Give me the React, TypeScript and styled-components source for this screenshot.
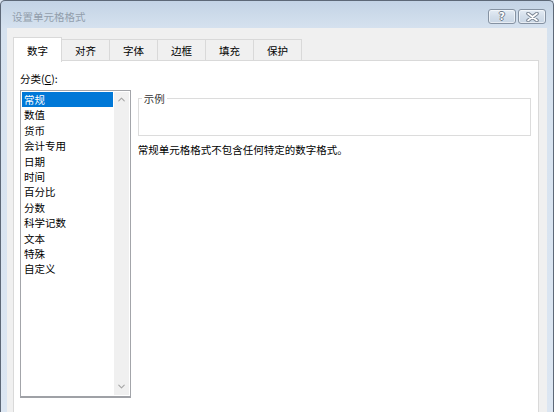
import React from 'react';
import styled, { createGlobalStyle } from 'styled-components';
import { ChevronUp, ChevronDown } from 'lucide-react';

const GlobalStyle = createGlobalStyle`
  html, body {
    margin: 0;
    padding: 0;
    overflow: hidden;
    background: #dce6f2;
  }
  body {
    font-family: "Noto Sans CJK SC", "Liberation Sans", sans-serif;
    font-size: 10.5px;
    color: #000;
  }
`;

const categories = [
  '常规',
  '数值',
  '货币',
  '会计专用',
  '日期',
  '时间',
  '百分比',
  '分数',
  '科学记数',
  '文本',
  '特殊',
  '自定义',
];

const tabs = ['数字', '对齐', '字体', '边框', '填充', '保护'];

const App: React.FC = () => {
  return (
    <>
      <GlobalStyle />
      <Window>
        <TitleBar>
          <Title>设置单元格格式</Title>
          <CaptionButtons>
            <CaptionButton>
              <HelpGlyph>?</HelpGlyph>
            </CaptionButton>
            <CaptionButton>
              <svg width="13" height="10" viewBox="0 0 13 10">
                <path d="M2 1.5 L11 8.5 M11 1.5 L2 8.5" stroke="#7b8694" strokeWidth="3.6" strokeLinecap="round" />
                <path d="M2 1.5 L11 8.5 M11 1.5 L2 8.5" stroke="#fff" strokeWidth="1.6" strokeLinecap="round" />
              </svg>
            </CaptionButton>
          </CaptionButtons>
        </TitleBar>
        <Content>
          <TabRow>
            {tabs.map((t, i) => (
              <Tab key={t} $active={i === 0}>
                {t}
              </Tab>
            ))}
          </TabRow>
          <Panel>
            <FieldLabel>
              分类(<u>C</u>):
            </FieldLabel>
            <Columns>
              <ListBox>
                <Items>
                  {categories.map((c, i) => (
                    <Item key={c} $selected={i === 0}>
                      {c}
                    </Item>
                  ))}
                </Items>
                <ScrollBar>
                  <ChevronUp size={11} color="#a6a6a6" strokeWidth={2.4} />
                  <ChevronDown size={11} color="#a6a6a6" strokeWidth={2.4} />
                </ScrollBar>
              </ListBox>
              <RightColumn>
                <GroupBox>
                  <Legend>示例</Legend>
                  <Sample />
                </GroupBox>
                <Description>常规单元格格式不包含任何特定的数字格式。</Description>
              </RightColumn>
            </Columns>
          </Panel>
        </Content>
      </Window>
    </>
  );
};

export default App;

const Window = styled.div`
  width: 554px;
  height: 412px;
  overflow: hidden;
  box-sizing: border-box;
  border: 1px solid #5d6877;
  border-bottom: none;
  border-radius: 5px 5px 0 0;
  background: linear-gradient(#c3d3e5, #d6e2ef 28px, #dce6f2);
  display: flex;
  flex-direction: column;
`;

const TitleBar = styled.div`
  height: 27px;
  flex-shrink: 0;
  box-sizing: border-box;
  padding: 8px 7px 0 11px;
  display: flex;
  align-items: flex-start;
  justify-content: space-between;
`;

const Title = styled.div`
  line-height: 16px;
  font-size: 10.5px;
  color: #929eac;
`;

const CaptionButtons = styled.div`
  display: flex;
  gap: 2px;
`;

const CaptionButton = styled.div`
  width: 28px;
  height: 15px;
  box-sizing: border-box;
  border: 1px solid #8592a2;
  border-radius: 3px;
  background: linear-gradient(#e4ecf5, #d3deea 50%, #c9d6e5);
  box-shadow: inset 0 0 0 1px rgba(255, 255, 255, 0.55);
  display: flex;
  align-items: center;
  justify-content: center;
`;

const HelpGlyph = styled.span`
  font-family: "DejaVu Sans", sans-serif;
  font-weight: bold;
  font-size: 10px;
  line-height: 11px;
  color: #fff;
  text-shadow: 1px 0 0 #6f7b8a, -1px 0 0 #6f7b8a, 0 1px 0 #6f7b8a, 0 -1px 0 #6f7b8a;
`;

const Content = styled.div`
  flex: 1;
  min-height: 0;
  margin: 0 6px;
  background: #f0f0f0;
  padding: 8px 8px 0 6px;
  display: flex;
  flex-direction: column;
`;

const TabRow = styled.div`
  display: flex;
  align-items: flex-end;
  height: 25px;
  flex-shrink: 0;
`;

const Tab = styled.div<{ $active?: boolean }>`
  width: 49px;
  height: ${({ $active }) => ($active ? '25px' : '22px')};
  box-sizing: border-box;
  margin-right: -1px;
  margin-bottom: ${({ $active }) => ($active ? '-1px' : '0')};
  border: 1px solid #d9d9d9;
  border-bottom: ${({ $active }) => ($active ? 'none' : '1px solid #d9d9d9')};
  background: ${({ $active }) => ($active ? '#fff' : '#f0f0f0')};
  position: relative;
  z-index: ${({ $active }) => ($active ? 1 : 0)};
  display: flex;
  align-items: center;
  justify-content: center;
  padding-top: ${({ $active }) => ($active ? '0' : '1px')};
`;

const Panel = styled.div`
  flex: 1;
  background: #fff;
  border: 1px solid #d9d9d9;
  border-bottom: none;
  margin-top: -1px;
  padding: 11px 7px 0 6px;
`;

const FieldLabel = styled.div`
  line-height: 14px;
  margin-bottom: 4px;
`;

const Columns = styled.div`
  display: flex;
  align-items: flex-start;
`;

const ListBox = styled.div`
  width: 111px;
  height: 308px;
  box-sizing: border-box;
  border: 1px solid #a3a5aa;
  border-bottom: 2px solid #9fa1a6;
  display: flex;
`;

const Items = styled.div`
  flex: 1;
  padding: 1px;
`;

const Item = styled.div<{ $selected?: boolean }>`
  height: 15.4px;
  line-height: 15.4px;
  padding-left: 2px;
  background: ${({ $selected }) => ($selected ? '#0078d7' : 'transparent')};
  color: ${({ $selected }) => ($selected ? '#fff' : '#000')};
`;

const ScrollBar = styled.div`
  width: 15px;
  margin: 1px 1px 1px 0;
  background: #f0f0f0;
  display: flex;
  flex-direction: column;
  align-items: center;
  justify-content: space-between;
  padding: 2px 0 3px;
`;

const RightColumn = styled.div`
  margin-left: 7px;
  margin-top: 2px;
  width: 394px;
`;

const GroupBox = styled.fieldset`
  margin: 0;
  padding: 0;
  border: 1px solid #dcdcdc;
`;

const Legend = styled.legend`
  margin-left: 3px;
  padding: 0 2px;
  line-height: 13px;
  color: #333;
`;

const Sample = styled.div`
  height: 30px;
`;

const Description = styled.div`
  margin-top: 7px;
  line-height: 14px;
`;
